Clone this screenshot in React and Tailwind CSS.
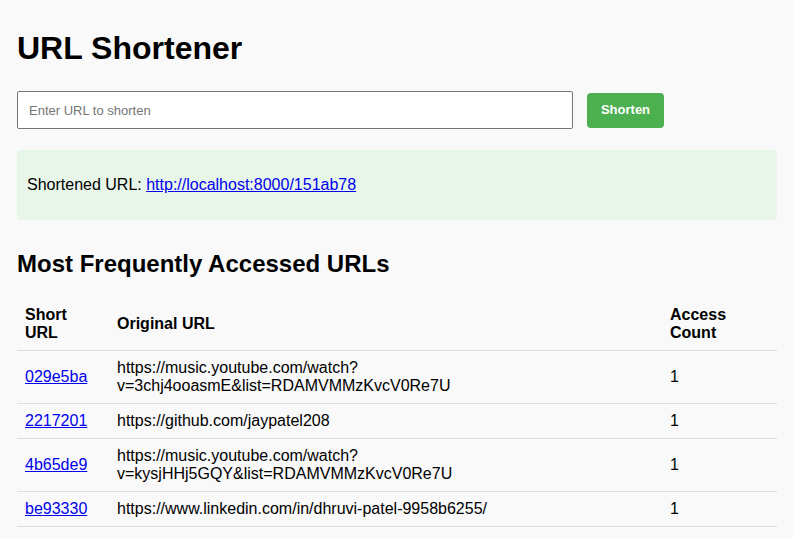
export default function App() {
  const rows = [
    {
      code: '029e5ba',
      url: 'https://music.youtube.com/watch?v=3chj4ooasmE&list=RDAMVMMzKvcV0Re7U',
      count: 1,
    },
    { code: '2217201', url: 'https://github.com/jaypatel208', count: 1 },
    {
      code: '4b65de9',
      url: 'https://music.youtube.com/watch?v=kysjHHj5GQY&list=RDAMVMMzKvcV0Re7U',
      count: 1,
    },
    { code: 'be93330', url: 'https://www.linkedin.com/in/dhruvi-patel-9958b6255/', count: 1 },
  ];

  return (
    <div className="min-h-screen bg-[#f9f9f9] text-black font-['Liberation_Sans',Arial,sans-serif]">
      <div className="ml-[17px] w-[760px] pt-[30px] pb-[13px]">
        <h1 className="text-[32px] font-bold leading-[37px]">URL Shortener</h1>

        <form className="mt-[24px] flex items-center gap-[14px]" onSubmit={(e) => e.preventDefault()}>
          <input
            type="text"
            placeholder="Enter URL to shorten"
            className="h-[38px] w-[556px] border border-[#767676] rounded-[2px] bg-white px-[11px] text-[13px] placeholder:text-[#757575] outline-none"
          />
          <button
            type="submit"
            className="h-[35px] w-[77px] rounded-[4px] bg-[#4CAF50] text-white text-[13px] font-bold"
          >
            Shorten
          </button>
        </form>

        <div className="mt-[21px] h-[70px] rounded-[4px] bg-[#e8f5e9] px-[10px] flex items-center text-[16px]">
          <p>
            Shortened URL:{' '}
            <a href="#" className="text-[#0000EE] underline">
              http://localhost:8000/151ab78
            </a>
          </p>
        </div>

        <h2 className="mt-[30px] text-[24px] font-bold leading-[28px]">Most Frequently Accessed URLs</h2>

        <table className="mt-[20px] w-[760px] table-fixed border-collapse text-[16px] leading-[18px]">
          <thead>
            <tr className="border-b border-[#ddd]">
              <th className="w-[92px] px-[8px] py-[8px] text-left font-bold">Short URL</th>
              <th className="w-[553px] px-[8px] py-[8px] text-left font-bold">Original URL</th>
              <th className="w-[115px] px-[8px] py-[8px] text-left font-bold">Access Count</th>
            </tr>
          </thead>
          <tbody>
            {rows.map((r) => (
              <tr key={r.code} className="border-b border-[#ddd]">
                <td className="px-[8px] py-[8px] align-middle">
                  <a href="#" className="text-[#0000EE] underline">
                    {r.code}
                  </a>
                </td>
                <td className="px-[8px] py-[8px] align-middle break-words">
                  {r.url.includes('?') ? (
                    <>
                      {r.url.split('?')[0]}?
                      <br />
                      {r.url.split('?')[1]}
                    </>
                  ) : (
                    r.url
                  )}
                </td>
                <td className="px-[8px] py-[8px] align-middle">{r.count}</td>
              </tr>
            ))}
          </tbody>
        </table>
      </div>
    </div>
  );
}
